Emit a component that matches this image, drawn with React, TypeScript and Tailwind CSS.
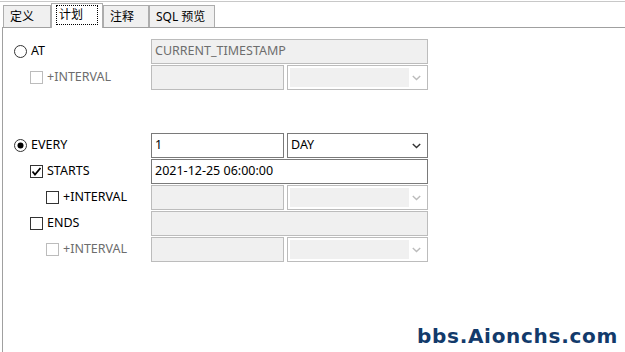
import React from "react";

const FONT = { fontFamily: '"Noto Sans", "Noto Sans CJK SC", sans-serif' };

function Radio({ checked }: { checked?: boolean }) {
  return (
    <svg width="13" height="13" viewBox="0 0 13 13" className="shrink-0">
      <circle cx="6.5" cy="6.5" r="6" fill="#fff" stroke="#333" strokeWidth="1" />
      {checked && <circle cx="6.5" cy="6.5" r="3" fill="#000" />}
    </svg>
  );
}

function Check({ checked, disabled }: { checked?: boolean; disabled?: boolean }) {
  return (
    <svg width="13" height="13" viewBox="0 0 13 13" className="shrink-0">
      <rect x="0.5" y="0.5" width="12" height="12" fill="#fff" stroke={disabled ? "#bcbcbc" : "#333"} />
      {checked && <polyline points="2.5,6.5 5,9.5 10.5,3" fill="none" stroke="#000" strokeWidth="1.8" />}
    </svg>
  );
}

function Chevron({ disabled }: { disabled?: boolean }) {
  return (
    <svg width="9" height="6" viewBox="0 0 9 6" className="shrink-0">
      <polyline points="0.8,1 4.5,4.6 8.2,1" fill="none" stroke={disabled ? "#bcbcbc" : "#333"} strokeWidth="1.4" />
    </svg>
  );
}

function Input({ w, value, disabled }: { w: string; value?: string; disabled?: boolean }) {
  return (
    <div
      className={`${w} h-[25px] flex items-center pl-[3px] border ${
        disabled ? "border-[#bcbcbc] bg-[#f0f0f0] text-[#6d6d6d]" : "border-[#7a7a7a] bg-white text-black"
      }`}
    >
      {value}
    </div>
  );
}

function Select({ value, disabled }: { value?: string; disabled?: boolean }) {
  if (disabled) {
    return (
      <div className="w-[141px] h-[25px] border border-[#bcbcbc] bg-white flex items-center pl-[2px] pr-[6px]">
        <div className="w-[119px] h-[19px] bg-[#f0f0f0]" />
        <div className="flex-1" />
        <Chevron disabled />
      </div>
    );
  }
  return (
    <div className="w-[141px] h-[25px] border border-[#7a7a7a] bg-white flex items-center pl-[3px] pr-[6px]">
      <span className="flex-1">{value}</span>
      <Chevron />
    </div>
  );
}

function Label({ indent, children, disabled }: { indent: string; children: React.ReactNode; disabled?: boolean }) {
  return (
    <div className={`w-[148px] shrink-0 flex items-center ${indent} ${disabled ? "text-[#6d6d6d]" : "text-black"}`}>
      {children}
    </div>
  );
}

function Tab({ label, selected, w }: { label: string; selected?: boolean; w: string }) {
  if (selected) {
    return (
      <div className={`${w} h-[25px] -mb-px z-10 bg-white border border-b-0 border-[#adadad] flex pt-[1px] px-[4px]`}>
        <div className="w-full h-[20px] border border-dotted border-black flex items-center pl-[2px]">{label}</div>
      </div>
    );
  }
  return (
    <div className={`${w} h-[22px] bg-[#f0f0f0] border border-b-0 border-[#adadad] flex items-center pl-[6px]`}>
      {label}
    </div>
  );
}

export default function App() {
  return (
    <div className="w-[625px] h-[352px] bg-white relative overflow-hidden flex flex-col text-[12.5px] leading-none" style={FONT}>
      <div className="h-[2px] shrink-0 border-b border-[#c8c8c8]" />
      <div className="h-[25px] shrink-0 flex items-end pl-[3px] text-[12px]">
        <Tab label="定义" w="w-[48px]" />
        <Tab label="计划" w="w-[52px]" selected />
        <Tab label="注释" w="w-[46px]" />
        <Tab label="SQL 预览" w="w-[66px]" />
      </div>
      <div className="flex-1 ml-[2px] border-l border-t border-[#a0a0a0] flex flex-col gap-[1px]">
        <div className="mt-[11px] h-[25px] flex">
          <Label indent="pl-[11px]">
            <Radio />
            <span className="ml-[4px]">AT</span>
          </Label>
          <Input w="w-[277px]" value="CURRENT_TIMESTAMP" disabled />
        </div>
        <div className="h-[25px] flex">
          <Label indent="pl-[27px]" disabled>
            <Check disabled />
            <span className="ml-[4px]">+INTERVAL</span>
          </Label>
          <div className="flex gap-[3px]">
            <Input w="w-[133px]" disabled />
            <Select disabled />
          </div>
        </div>

        <div className="mt-[42px] h-[25px] flex">
          <Label indent="pl-[11px]">
            <Radio checked />
            <span className="ml-[4px]">EVERY</span>
          </Label>
          <div className="flex gap-[3px]">
            <Input w="w-[133px]" value="1" />
            <Select value="DAY" />
          </div>
        </div>
        <div className="h-[25px] flex">
          <Label indent="pl-[27px]">
            <Check checked />
            <span className="ml-[4px]">STARTS</span>
          </Label>
          <Input w="w-[277px]" value="2021-12-25 06:00:00" />
        </div>
        <div className="h-[25px] flex">
          <Label indent="pl-[43px]">
            <Check />
            <span className="ml-[4px]">+INTERVAL</span>
          </Label>
          <div className="flex gap-[3px]">
            <Input w="w-[133px]" disabled />
            <Select disabled />
          </div>
        </div>
        <div className="h-[25px] flex">
          <Label indent="pl-[27px]">
            <Check />
            <span className="ml-[4px]">ENDS</span>
          </Label>
          <Input w="w-[277px]" disabled />
        </div>
        <div className="h-[25px] flex">
          <Label indent="pl-[43px]" disabled>
            <Check disabled />
            <span className="ml-[4px]">+INTERVAL</span>
          </Label>
          <div className="flex gap-[3px]">
            <Input w="w-[133px]" disabled />
            <Select disabled />
          </div>
        </div>
      </div>
      <div
        className="absolute left-[417px] top-[326px] text-[20px] font-bold text-[#123a6b] tracking-[0.7px] leading-none"
        style={{ fontFamily: '"DejaVu Sans", sans-serif' }}
      >
        bbs.Aionchs.com
      </div>
    </div>
  );
}
